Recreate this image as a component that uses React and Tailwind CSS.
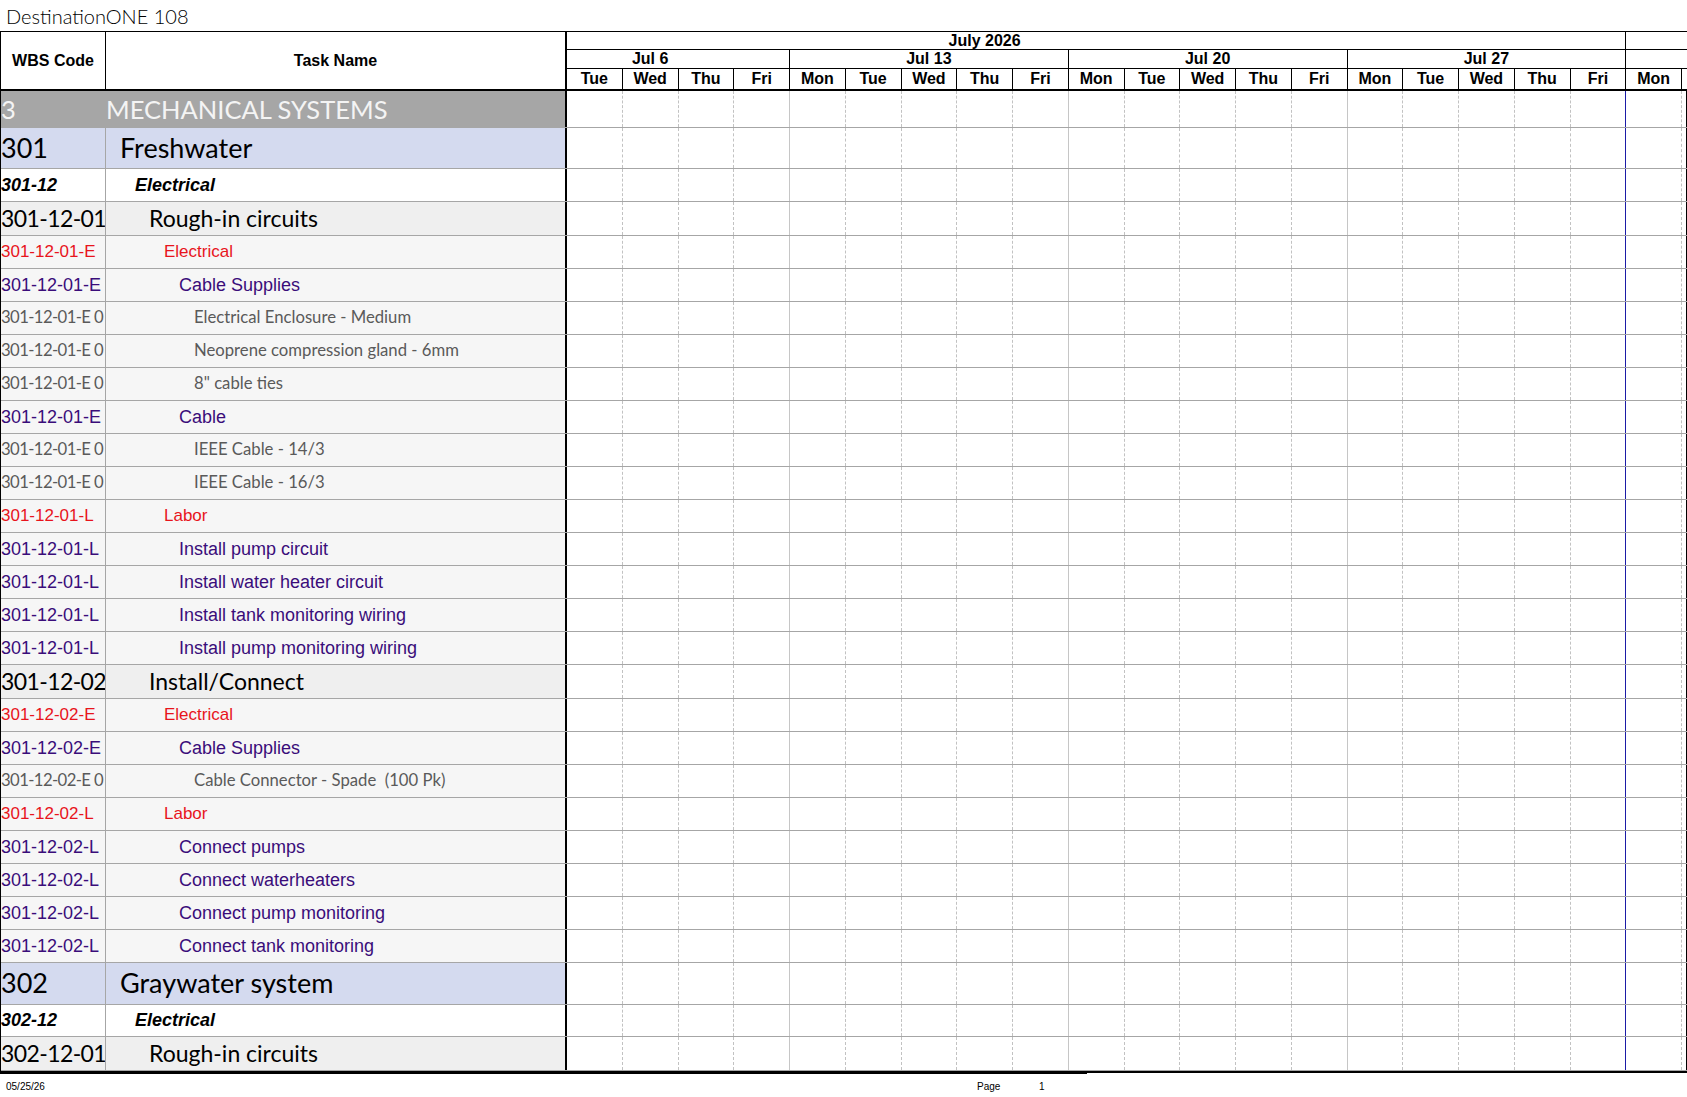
const DAYS = ['Tue', 'Wed', 'Thu', 'Fri', 'Mon', 'Tue', 'Wed', 'Thu', 'Fri', 'Mon', 'Tue', 'Wed', 'Thu', 'Fri', 'Mon', 'Tue', 'Wed', 'Thu', 'Fri', 'Mon'];
const WEEKS = ['Jul 6', 'Jul 13', 'Jul 20', 'Jul 27'];

const ARIAL = "font-['Liberation_Sans',Arial,sans-serif]";
const CALIBRI = "font-['Lato',sans-serif]";

// level -> look of the left two cells
const LEVELS = {
  0: { bg: 'bg-[#a6a6a6]', text: `${CALIBRI} text-[25.5px] text-[#f4f4f4]`, code: '', pad: 'pl-0' },
  1: { bg: 'bg-[#d4daef]', text: `${CALIBRI} text-[27px] text-black`, code: '', pad: 'pl-[14px]' },
  2: { bg: 'bg-white', text: `${ARIAL} text-[18px] font-bold italic text-black`, code: '', pad: 'pl-[29px]' },
  3: { bg: 'bg-[#efefef]', text: `${CALIBRI} text-[23px] text-black`, code: 'tracking-[-0.6px]', pad: 'pl-[43px]' },
  4: { bg: 'bg-[#f6f6f6]', text: `${ARIAL} text-[17px] text-[#e8141c]`, code: '', pad: 'pl-[58px]' },
  5: { bg: 'bg-[#f6f6f6]', text: `${ARIAL} text-[18px] text-[#3a0d7a]`, code: '', pad: 'pl-[73px]' },
  6: { bg: 'bg-[#f6f6f6]', text: `${CALIBRI} text-[16.7px] text-[#5a5a5a]`, code: 'tracking-[-0.6px]', pad: 'pl-[88px]' },
};

const ROWS = [
  { code: '3', name: 'MECHANICAL SYSTEMS', lvl: 0, h: 'h-[37px]' },
  { code: '301', name: 'Freshwater', lvl: 1, h: 'h-[41px]' },
  { code: '301-12', name: 'Electrical', lvl: 2, h: 'h-[33px]' },
  { code: '301-12-01', name: 'Rough-in circuits', lvl: 3, h: 'h-[34px]' },
  { code: '301-12-01-E', name: 'Electrical', lvl: 4 },
  { code: '301-12-01-E', name: 'Cable Supplies', lvl: 5 },
  { code: '301-12-01-E 0', name: 'Electrical Enclosure - Medium', lvl: 6 },
  { code: '301-12-01-E 0', name: 'Neoprene compression gland - 6mm', lvl: 6 },
  { code: '301-12-01-E 0', name: '8" cable ties', lvl: 6 },
  { code: '301-12-01-E', name: 'Cable', lvl: 5 },
  { code: '301-12-01-E 0', name: 'IEEE Cable - 14/3', lvl: 6 },
  { code: '301-12-01-E 0', name: 'IEEE Cable - 16/3', lvl: 6 },
  { code: '301-12-01-L', name: 'Labor', lvl: 4 },
  { code: '301-12-01-L', name: 'Install pump circuit', lvl: 5 },
  { code: '301-12-01-L', name: 'Install water heater circuit', lvl: 5 },
  { code: '301-12-01-L', name: 'Install tank monitoring wiring', lvl: 5 },
  { code: '301-12-01-L', name: 'Install pump monitoring wiring', lvl: 5 },
  { code: '301-12-02', name: 'Install/Connect', lvl: 3, h: 'h-[34px]' },
  { code: '301-12-02-E', name: 'Electrical', lvl: 4 },
  { code: '301-12-02-E', name: 'Cable Supplies', lvl: 5 },
  { code: '301-12-02-E 0', name: 'Cable Connector - Spade\u00a0 (100 Pk)', lvl: 6 },
  { code: '301-12-02-L', name: 'Labor', lvl: 4 },
  { code: '301-12-02-L', name: 'Connect pumps', lvl: 5 },
  { code: '301-12-02-L', name: 'Connect waterheaters', lvl: 5 },
  { code: '301-12-02-L', name: 'Connect pump monitoring', lvl: 5 },
  { code: '301-12-02-L', name: 'Connect tank monitoring', lvl: 5 },
  { code: '302', name: 'Graywater system', lvl: 1, h: 'h-[42px]' },
  { code: '302-12', name: 'Electrical', lvl: 2, h: 'h-[32px]' },
  { code: '302-12-01', name: 'Rough-in circuits', lvl: 3, h: 'h-[34px]' },
];

function dayLine(i) {
  if (i === 3 || i === 8 || i === 13) return 'border-solid border-[#c6c6c6]';
  if (i === 18) return 'border-solid border-[#1b1ba6]';
  return 'border-dashed border-[#c2c2c2]';
}

function GanttHeader() {
  return (
    <div className={`flex-1 min-w-0 overflow-hidden flex flex-col ${ARIAL} text-[16px] font-bold text-black leading-none`}>
      <div className="h-[17px] flex -ml-[223px]">
        <div className="w-[1282.25px] shrink-0 border-r border-black flex items-center justify-center">July 2026</div>
        <div className="flex-1" />
      </div>
      <div className="h-[19px] flex border-t border-black -ml-[55.75px]">
        {WEEKS.map((w) => (
          <div key={w} className="w-[278.75px] shrink-0 border-r border-black flex items-center justify-center">
            {w}
          </div>
        ))}
        <div className="flex-1" />
      </div>
      <div className="h-[21px] flex border-t border-black">
        {DAYS.map((d, i) => (
          <div key={i} className="w-[55.75px] shrink-0 border-r border-black flex items-center justify-center">
            {d}
          </div>
        ))}
        <div className="flex-1" />
      </div>
    </div>
  );
}

function Row({ row }) {
  const s = LEVELS[row.lvl];
  return (
    <div className={`flex ${row.h || 'h-[33px]'} border-b border-[#a6a6a6]`}>
      <div className={`w-[105px] shrink-0 overflow-hidden whitespace-nowrap flex items-center border-r border-[#a6a6a6] ${s.bg} ${s.text} ${s.code}`}>
        {row.code}
      </div>
      <div className={`w-[461px] shrink-0 overflow-hidden whitespace-nowrap flex items-center border-r-2 border-black ${s.bg} ${s.text} ${s.pad}`}>
        {row.name}
      </div>
      <div className="flex-1 min-w-0 flex bg-white">
        {DAYS.map((d, i) => (
          <div key={i} className={`w-[55.75px] shrink-0 border-r ${dayLine(i)}`} />
        ))}
        <div className="flex-1 border-r border-black" />
      </div>
    </div>
  );
}

export default function App() {
  return (
    <div className="w-[1687px] h-[1097px] bg-white overflow-hidden">
      <div className="h-[31px] pl-[6px] flex items-center font-['Lato',sans-serif] font-light text-[20px] text-black">
        DestinationONE 108
      </div>

      <div className="border-t border-l border-black">
        {/* header */}
        <div className="flex h-[59px] border-b-2 border-black">
          <div className={`w-[105px] shrink-0 border-r border-black flex items-center justify-center ${ARIAL} text-[16px] font-bold`}>
            WBS Code
          </div>
          <div className={`w-[461px] shrink-0 border-r-2 border-black flex items-center justify-center ${ARIAL} text-[16px] font-bold`}>
            Task Name
          </div>
          <GanttHeader />
        </div>

        {ROWS.map((r, i) => (
          <Row key={i} row={r} />
        ))}
      </div>

      <div className="flex items-start -ml-px">
        <div className="w-[1088px] h-[3px] bg-black" />
        <div className="flex-1 h-[2px] bg-black" />
      </div>

      <div className={`flex items-center mt-[5px] ${ARIAL} text-[10px] text-black`}>
        <div className="w-[977px] pl-[6px]">05/25/26</div>
        <div className="w-[62px]">Page</div>
        <div>1</div>
      </div>
    </div>
  );
}
